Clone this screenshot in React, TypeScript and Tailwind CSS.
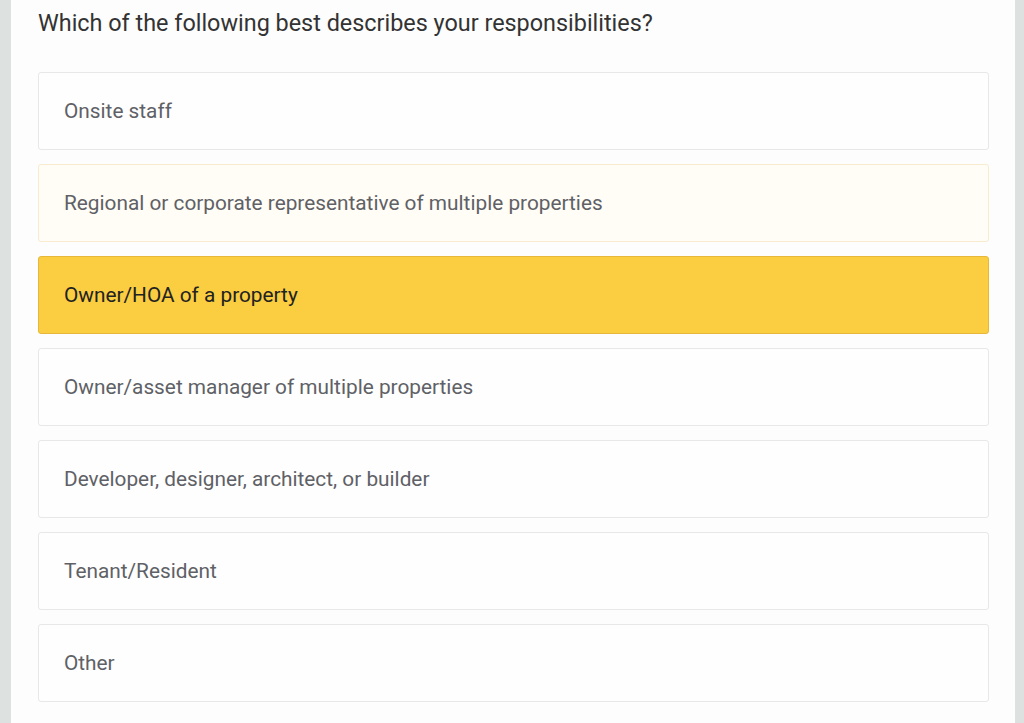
const options = [
  'Onsite staff',
  'Regional or corporate representative of multiple properties',
  'Owner/HOA of a property',
  'Owner/asset manager of multiple properties',
  'Developer, designer, architect, or builder',
  'Tenant/Resident',
  'Other',
]

export default function App() {
  return (
    <div className="flex h-[723px] w-full overflow-hidden bg-[#dde2e1]" style={{ fontFamily: 'Roboto, "Liberation Sans", sans-serif' }}>
      <div className="ml-[11px] mr-[9px] flex-1 bg-[#fdfdfd] pl-[27px] pr-[26px]">
        <h1 className="pt-[7px] text-[23.4px] leading-[32px] text-[#333]">
          Which of the following best describes your responsibilities?
        </h1>
        <div className="mt-[33px] flex flex-col gap-[14px]">
          {options.map((o, i) => {
            const cls =
              i === 2
                ? 'border-[#e7b73a] bg-[#fbcd40] text-[#222]'
                : i === 1
                ? 'border-[#f8ebcf] bg-[#fffdf6] text-[#5f6166]'
                : 'border-[#e8e8e8] bg-[#fefefe] text-[#5f6166]'
            return (
              <div key={o} className={`flex h-[78px] items-center rounded-[3px] border pl-[25px] pt-[2px] text-[20.8px] ${cls}`}>
                {o}
              </div>
            )
          })}
        </div>
      </div>
    </div>
  )
}
